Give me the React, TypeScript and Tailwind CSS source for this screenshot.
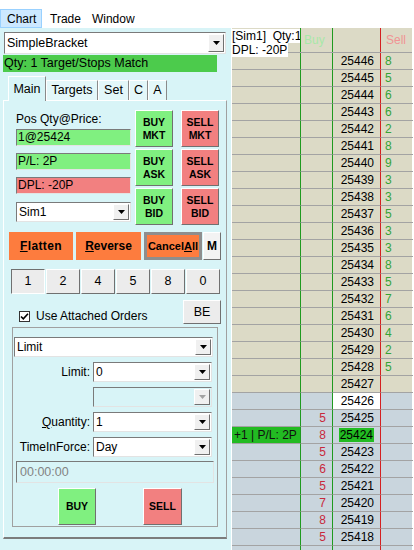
import React from "react";

// ---- small win-forms style building blocks ----

const raised =
  "border border-t-white border-l-white border-r-[#707070] border-b-[#707070]";
const sunken =
  "border border-t-[#7a7a7a] border-l-[#7a7a7a] border-r-[#e3e3e3] border-b-[#e3e3e3]";

function DropArrow({ disabled }: { disabled?: boolean }) {
  return (
    <div
      className={`flex w-[16px] items-center justify-center bg-[#f0f0f0] ${raised}`}
    >
      <svg width="7" height="4" viewBox="0 0 7 4">
        <path d="M0 0h7L3.5 4z" fill={disabled ? "#a3a3a3" : "#000"} />
      </svg>
    </div>
  );
}

function Combo({
  value,
  className = "",
  disabled,
}: {
  value?: string;
  className?: string;
  disabled?: boolean;
}) {
  return (
    <div
      className={`flex ${sunken} ${disabled ? "bg-[#d8f4f7]" : "bg-white"} ${className}`}
    >
      <span className="flex flex-1 items-center pl-[2px] leading-none">
        {value}
      </span>
      <div className="flex p-[1px]">
        <DropArrow disabled={disabled} />
      </div>
    </div>
  );
}

function OrderButton({
  top,
  bottom,
  sell,
  className = "",
}: {
  top: string;
  bottom?: string;
  sell?: boolean;
  className?: string;
}) {
  return (
    <button
      className={`flex h-[37px] w-[38px] flex-col items-center justify-center text-[10.5px] font-bold leading-[13px] ${raised} ${
        sell ? "bg-[#f28080]" : "bg-[#80f080]"
      } ${className}`}
    >
      <span>{top}</span>
      {bottom && <span>{bottom}</span>}
    </button>
  );
}

function FieldRow({
  label,
  children,
}: {
  label: React.ReactNode;
  children: React.ReactNode;
}) {
  return (
    <div className="mt-[5px] flex h-[20px] items-center">
      <span className="w-[80px] pr-[3px] text-right">{label}</span>
      {children}
    </div>
  );
}

// ---- ladder data ----

const sellSizes: Record<number, number> = {
  25446: 8, 25445: 5, 25444: 6, 25443: 6, 25442: 2, 25441: 8, 25440: 9,
  25439: 3, 25438: 3, 25437: 5, 25436: 3, 25435: 3, 25434: 8, 25433: 5,
  25432: 7, 25431: 6, 25430: 4, 25429: 2, 25428: 5,
};
const buySizes: Record<number, number> = {
  25425: 5, 25424: 8, 25423: 5, 25422: 6, 25421: 5, 25420: 7, 25419: 8,
  25418: 5,
};
const lastPrice = 25426;
const entryPrice = 25424;

const prices = Array.from({ length: 29 }, (_, i) => 25446 - i);

const ladderCols = "grid grid-cols-[69px_32px_48px_32px]";
const cell = "h-[17px] border-b border-b-[#a3a3a3] leading-[16px]";

function LadderRow({ price }: { price?: number }) {
  const askSide = price !== undefined && price > lastPrice;
  const rowBg = askSide ? "bg-[#dcdac6]" : "bg-[#c9d5dd]";
  return (
    <div className={`${ladderCols} ${rowBg}`}>
      <div className={`${cell} border-r border-r-[#1f9a1f] whitespace-nowrap`}>
        {price === entryPrice && (
          <span className="inline-block h-[16px] bg-[#22bb22] pl-[2px] pr-[3px] text-[#101010]">
            +1 | P/L: 2P
          </span>
        )}
      </div>
      <div className={`${cell} border-r border-r-[#1f9a1f] pr-[6px] text-right text-[#c8283c]`}>
        {price !== undefined ? buySizes[price] ?? "" : ""}
      </div>
      <div
        className={`${cell} border-r border-r-[#d42020] pr-[6px] text-right ${
          price === lastPrice ? "bg-white" : ""
        }`}
      >
        {price === entryPrice ? (
          <span className="bg-[#22bb22] px-[1px]">{price}</span>
        ) : (
          price
        )}
      </div>
      <div className={`${cell} pl-[4px] text-[#36a336]`}>
        {price !== undefined ? sellSizes[price] ?? "" : ""}
      </div>
    </div>
  );
}

export default function App() {
  const qtyButtons = ["1", "2", "4", "5", "8", "0"];

  return (
    <div className="flex h-[550px] w-[414px] flex-col overflow-hidden bg-white font-['Liberation_Sans',Arial,sans-serif] text-[12px] text-black">
      {/* menu bar */}
      <div className="flex h-[28px] shrink-0 items-end bg-white">
        <div className="flex h-[19px] w-[42px] items-center border border-[#99d1ff] bg-[#cce8ff] pl-[6px]">
          Chart
        </div>
        <div className="ml-[8px] flex h-[19px] items-center">Trade</div>
        <div className="ml-[11px] flex h-[19px] items-center">Window</div>
      </div>

      <div className="flex min-h-0 flex-1">
        {/* left order entry panel */}
        <div className="w-[232px] shrink-0 border-r border-r-white bg-[#d8f4f7]">
          <Combo
            value="SimpleBracket"
            className="ml-[4px] mt-[4px] h-[22px] w-[222px] text-[12.5px]"
          />
          <div className="ml-[3px] mt-[1px] h-[17px] w-[214px] bg-[#4ccb4c] pl-[1px] text-[12.5px] leading-[17px]">
            Qty: 1 Target/Stops Match
          </div>

          {/* tabs */}
          <div className="relative z-10 ml-[8px] mt-[4px] flex h-[24px] items-end">
            <div className="-mb-px flex h-[25px] w-[38px] items-center justify-center border border-b-0 border-t-white border-l-white border-r-[#8a8a8a] bg-[#d8f4f7] text-[12.5px]">
              Main
            </div>
            {[
              ["Targets", "w-[52px]"],
              ["Set", "w-[31px]"],
              ["C", "w-[19px]"],
              ["A", "w-[19px]"],
            ].map(([t, w]) => (
              <div
                key={t}
                className={`flex h-[20px] ${w} items-center justify-center border border-b-0 border-t-white border-l-white border-r-[#8a8a8a] bg-[#e3f7f9] text-[12.5px]`}
              >
                {t}
              </div>
            ))}
          </div>

          {/* tab page */}
          <div className="ml-[3px] h-[439px] w-[224px] border-b-2 border-l border-r border-t border-b-[#7c7c7c] border-l-white border-r-[#a0a0a0] border-t-white">
            <div className="flex pl-[12px] pt-[9px]">
              <div className="w-[115px]">
                <div className="h-[19px] pt-[2px] leading-[14px]">
                  Pos Qty@Price:
                </div>
                <div className={`h-[17px] bg-[#80f080] pl-[1px] leading-[15px] ${sunken}`}>
                  1@25424
                </div>
                <div className={`mt-[7px] h-[17px] bg-[#80f080] pl-[1px] leading-[15px] ${sunken}`}>
                  P/L: 2P
                </div>
                <div className={`mt-[7px] h-[17px] bg-[#f28080] pl-[1px] leading-[15px] ${sunken}`}>
                  DPL: -20P
                </div>
                <Combo value="Sim1" className="mt-[8px] h-[20px]" />
              </div>
              <div className="ml-[4px] flex flex-col gap-[2px]">
                <OrderButton top="BUY" bottom="MKT" />
                <OrderButton top="BUY" bottom="ASK" />
                <OrderButton top="BUY" bottom="BID" />
              </div>
              <div className="ml-[8px] flex flex-col gap-[2px]">
                <OrderButton top="SELL" bottom="MKT" sell />
                <OrderButton top="SELL" bottom="ASK" sell />
                <OrderButton top="SELL" bottom="BID" sell />
              </div>
            </div>

            {/* position actions */}
            <div className="ml-[5px] mt-[7px] flex h-[28px] text-[12px] font-bold">
              <button className="w-[64px] bg-[#fd7c3e] tracking-[0.4px]">
                <u>F</u>latten
              </button>
              <button className="ml-[3px] w-[65px] bg-[#fd7c3e]">
                <u>R</u>everse
              </button>
              <button className="ml-[3px] w-[58px] border-[3px] border-[#8e8e8e] bg-[#fd7c3e] text-[11px]">
                Cancel<u>A</u>ll
              </button>
              <button className={`ml-[1px] w-[18px] bg-[#f3f3f3] ${raised}`}>
                M
              </button>
            </div>

            {/* quantity presets */}
            <div className="ml-[7px] mt-[9px] flex h-[25px] gap-[1px] text-[12.5px]">
              {qtyButtons.map((q, i) => (
                <button
                  key={q}
                  className={`w-[34px] ${
                    i === 0
                      ? "border border-t-[#707070] border-l-[#707070] border-r-white border-b-white bg-[#ececec]"
                      : `bg-[#ececec] ${raised}`
                  }`}
                >
                  {q}
                </button>
              ))}
            </div>

            {/* attached orders */}
            <div className="mt-[6px] flex h-[24px] items-start">
              <div className="ml-[15px] mt-[10px] flex items-center">
                <div className="flex h-[11px] w-[11px] items-center justify-center border border-[#333] bg-white">
                  <svg width="9" height="9" viewBox="0 0 9 9">
                    <path d="M1 4.5l2.3 2.3L8 1.8" stroke="#000" strokeWidth="1.6" fill="none" />
                  </svg>
                </div>
                <span className="ml-[6px] text-[12px] leading-none">
                  Use Attached Orders
                </span>
              </div>
              <button className={`ml-auto mr-[5px] h-[24px] w-[38px] bg-[#ececec] text-[12.5px] ${raised}`}>
                BE
              </button>
            </div>

            {/* order ticket group */}
            <div className="ml-[8px] mt-[3px] h-[200px] w-[206px] border border-[#a0a0a0]">
              <Combo value="Limit" className="ml-[1px] mt-[9px] h-[20px] w-[199px]" />
              <FieldRow label="Limit:">
                <Combo value="0" className="h-[20px] w-[119px]" />
              </FieldRow>
              <FieldRow label="">
                <Combo disabled className="h-[20px] w-[119px]" />
              </FieldRow>
              <FieldRow
                label={
                  <>
                    <u>Q</u>uantity:
                  </>
                }
              >
                <Combo value="1" className="h-[20px] w-[119px]" />
              </FieldRow>
              <FieldRow label="TimeInForce:">
                <Combo value="Day" className="h-[20px] w-[119px]" />
              </FieldRow>
              <div className={`ml-[3px] mt-[4px] flex h-[22px] w-[198px] items-center pl-[3px] text-[12.5px] text-[#838383] ${sunken}`}>
                00:00:00
              </div>
              <div className="mt-[5px] flex">
                <OrderButton top="BUY" className="ml-[45px]" />
                <OrderButton top="SELL" sell className="ml-[47px] w-[39px]" />
              </div>
            </div>
          </div>
        </div>

        {/* price ladder */}
        <div className="relative min-w-0 flex-1 border-r-2 border-r-white">
          <div className={`${ladderCols} h-[25px] border-b border-b-[#a3a3a3] bg-[#dcdac6] leading-[24px]`}>
            <div className="border-r border-r-[#1f9a1f]" />
            <div className="border-r border-r-[#1f9a1f] pl-[3px] text-[#a8e8a8]">
              Buy
            </div>
            <div className="border-r border-r-[#d42020]" />
            <div className="pl-[5px] text-[#f09494]">Sell</div>
          </div>
          {prices.map((p) => (
            <LadderRow key={p} price={p} />
          ))}
          <LadderRow />

          {/* account label floating over the ladder corner */}
          <div className="absolute left-0 top-[1px] w-[68px] overflow-hidden whitespace-pre leading-[14px]">
            <div className="w-fit bg-white pr-[1px]">[Sim1]  Qty:1</div>
            <div className="w-fit bg-white pr-[1px]">DPL: -20P</div>
          </div>
        </div>
      </div>
    </div>
  );
}
